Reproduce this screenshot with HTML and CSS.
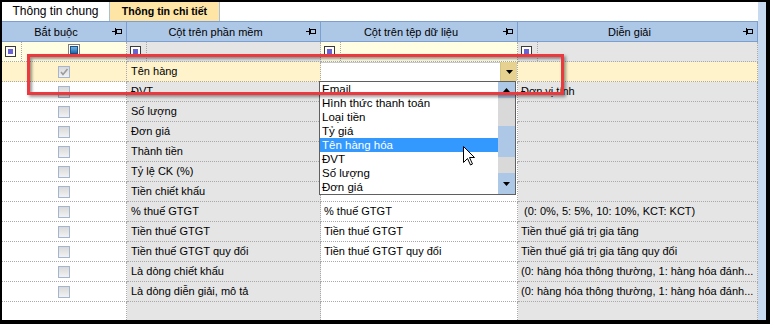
FILE: index.html
```html
<!DOCTYPE html>
<html>
<head>
<meta charset="UTF-8">
<link rel="stylesheet" href="styles.css">
</head>
<body>
<div class="window">
    <div class="main">
        <div class="tabs">
            <div class="tab tab-general">Thông tin chung</div>
            <div class="tab tab-detail">Thông tin chi tiết</div>
        </div>

        <div class="grid-row header">
            <div class="hcell"><span class="hlabel">Bắt buộc</span><svg class="pin" width="10" height="8" viewBox="0 0 10 8"><path d="M0 3.5H3.5M3.5 0V7" stroke="#000" fill="none"/><rect x="4.5" y="1.5" width="5" height="4" stroke="#000" fill="none"/></svg></div>
            <div class="hcell"><span class="hlabel">Cột trên phần mềm</span><svg class="pin" width="10" height="8" viewBox="0 0 10 8"><path d="M0 3.5H3.5M3.5 0V7" stroke="#000" fill="none"/><rect x="4.5" y="1.5" width="5" height="4" stroke="#000" fill="none"/></svg></div>
            <div class="hcell"><span class="hlabel">Cột trên tệp dữ liệu</span><svg class="pin" width="10" height="8" viewBox="0 0 10 8"><path d="M0 3.5H3.5M3.5 0V7" stroke="#000" fill="none"/><rect x="4.5" y="1.5" width="5" height="4" stroke="#000" fill="none"/></svg></div>
            <div class="hcell"><span class="hlabel">Diễn giải</span><svg class="pin" width="10" height="8" viewBox="0 0 10 8"><path d="M0 3.5H3.5M3.5 0V7" stroke="#000" fill="none"/><rect x="4.5" y="1.5" width="5" height="4" stroke="#000" fill="none"/></svg></div>
        </div>

        <!-- auto filter row -->
        <div class="grid-row filter">
            <div class="fcell cream"><span class="op-cell"><span class="op"><i></i></span></span><span class="fval"><span class="fcheck"><i></i></span></span></div>
            <div class="fcell gray"><span class="op-cell"><span class="op"><i></i></span></span><span class="fval"></span></div>
            <div class="fcell cream"><span class="op-cell"><span class="op"><i></i></span></span><span class="fval"></span></div>
            <div class="fcell gray"><span class="op-cell"><span class="op"><i></i></span></span><span class="fval"></span></div>
        </div>

        <div class="grid-row focused">
            <div class="cell c1"><span class="check"><svg width="10" height="10" viewBox="0 0 10 10"><path d="M2 5L4 7.5L8.5 2" stroke="#9c9c9c" stroke-width="1.6" fill="none"/></svg></span></div>
            <div class="cell c2">Tên hàng</div>
            <div class="cell c3 combo-cell"><span class="combo"></span><span class="combo-btn"><svg width="7" height="4" viewBox="0 0 7 4"><path d="M0 0H7L3.5 4Z" fill="#000"/></svg></span></div>
            <div class="cell c4"></div>
        </div>
        <div class="grid-row">
            <div class="cell c1"><span class="check"></span></div>
            <div class="cell c2">ĐVT</div>
            <div class="cell c3"></div>
            <div class="cell c4">Đơn vị tính</div>
        </div>
        <div class="grid-row">
            <div class="cell c1"><span class="check"></span></div>
            <div class="cell c2">Số lượng</div>
            <div class="cell c3"></div>
            <div class="cell c4"></div>
        </div>
        <div class="grid-row">
            <div class="cell c1"><span class="check"></span></div>
            <div class="cell c2">Đơn giá</div>
            <div class="cell c3"></div>
            <div class="cell c4"></div>
        </div>
        <div class="grid-row">
            <div class="cell c1"><span class="check"></span></div>
            <div class="cell c2">Thành tiền</div>
            <div class="cell c3"></div>
            <div class="cell c4"></div>
        </div>
        <div class="grid-row">
            <div class="cell c1"><span class="check"></span></div>
            <div class="cell c2">Tỷ lệ CK (%)</div>
            <div class="cell c3"></div>
            <div class="cell c4"></div>
        </div>
        <div class="grid-row">
            <div class="cell c1"><span class="check"></span></div>
            <div class="cell c2">Tiền chiết khấu</div>
            <div class="cell c3"></div>
            <div class="cell c4"></div>
        </div>
        <div class="grid-row">
            <div class="cell c1"><span class="check"></span></div>
            <div class="cell c2">% thuế GTGT</div>
            <div class="cell c3">% thuế GTGT</div>
            <div class="cell c4"> (0: 0%, 5: 5%, 10: 10%, KCT: KCT)</div>
        </div>
        <div class="grid-row">
            <div class="cell c1"><span class="check"></span></div>
            <div class="cell c2">Tiền thuế GTGT</div>
            <div class="cell c3">Tiền thuế GTGT</div>
            <div class="cell c4">Tiền thuế giá trị gia tăng</div>
        </div>
        <div class="grid-row">
            <div class="cell c1"><span class="check"></span></div>
            <div class="cell c2">Tiền thuế GTGT quy đổi</div>
            <div class="cell c3">Tiền thuế GTGT quy đổi</div>
            <div class="cell c4">Tiền thuế giá trị gia tăng quy đổi</div>
        </div>
        <div class="grid-row">
            <div class="cell c1"><span class="check"></span></div>
            <div class="cell c2">Là dòng chiết khấu</div>
            <div class="cell c3"></div>
            <div class="cell c4">(0: hàng hóa thông thường, 1: hàng hóa đánh...</div>
        </div>
        <div class="grid-row">
            <div class="cell c1"><span class="check"></span></div>
            <div class="cell c2">Là dòng diễn giải, mô tả</div>
            <div class="cell c3"></div>
            <div class="cell c4">(0: hàng hóa thông thường, 1: hàng hóa đánh...</div>
        </div>
        <div class="grid-row">
            <div class="cell c1"></div>
            <div class="cell c2"></div>
            <div class="cell c3"></div>
            <div class="cell c4"></div>
        </div>
    </div>
    <div class="side-strip"></div>

    <!-- open combo list -->
    <div class="dropdown">
        <div class="items">
            <div class="item">Email</div>
            <div class="item">Hình thức thanh toán</div>
            <div class="item">Loại tiền</div>
            <div class="item">Tỷ giá</div>
            <div class="item selected">Tên hàng hóa</div>
            <div class="item">ĐVT</div>
            <div class="item">Số lượng</div>
            <div class="item">Đơn giá</div>
        </div>
        <div class="vscroll">
            <div class="sb-btn sb-up"><svg width="7" height="4" viewBox="0 0 7 4"><path d="M0 4H7L3.5 0Z" fill="#000"/></svg></div>
            <div class="sb-track sb-top"></div>
            <div class="sb-thumb"></div>
            <div class="sb-track sb-bottom"></div>
            <div class="sb-btn sb-down"><svg width="7" height="4" viewBox="0 0 7 4"><path d="M0 0H7L3.5 4Z" fill="#000"/></svg></div>
        </div>
    </div>

    <div class="callout"></div>

    <svg class="cursor" width="13" height="20" viewBox="0 0 13 20"><path d="M0.5 0.5V16.5L4.5 12.5L7.5 19L9.5 18L6.5 11.5H11.5Z" fill="#fff" stroke="#000" stroke-linejoin="round"/></svg>
</div>
</body>
</html>
```

FILE: styles.css
```css
* {
    box-sizing: border-box;
}

body {
    margin: 0;
    background: #000;
    font-family: "Liberation Sans", Arial, sans-serif;
    font-size: 11px;
    color: #000;
}

.window {
    position: relative;
    width: 770px;
    height: 324px;
    padding: 2px 4px 4px 2px;
    display: flex;
    background: #000;
}

.main {
    width: 756px;
    height: 318px;
    background: #fff;
    overflow: hidden;
    display: flex;
    flex-direction: column;
}

.side-strip {
    width: 8px;
    background: #c8daf0;
}

/* tabs */
.tabs {
    display: flex;
    height: 19px;
    flex-shrink: 0;
    background: #fff;
}

.tab {
    display: flex;
    align-items: center;
    justify-content: center;
    border-right: 1px solid #a7bfdd;
    padding-bottom: 1px;
}

.tab-general {
    width: 108px;
    font-size: 12px;
}

.tab-detail {
    width: 110px;
    background: #fee5a6;
    font-weight: bold;
    font-size: 10.6px;
}

/* grid */
.grid-row {
    display: grid;
    grid-template-columns: 125px 194px 197px 240px;
    flex-shrink: 0;
}

.header {
    height: 21px;
    background: #adc7e7;
    border-top: 1px solid #7d9fcf;
    border-bottom: 1px solid #7d9fcf;
}

.hcell {
    display: flex;
    align-items: center;
    border-right: 1px solid #7d9fcf;
    font-size: 11px;
}

.hlabel {
    flex: 1;
    text-align: center;
    white-space: nowrap;
}

.pin {
    margin-right: 4px;
    margin-left: 2px;
}

.filter {
    height: 20px;
}

.fcell {
    display: flex;
    border-right: 1px dotted #a9a9a9;
    border-bottom: 1px dotted #a9a9a9;
}

.fcell.cream {
    background: #fffde2;
}

.fcell.gray {
    background: #e5e5e5;
}

.op-cell {
    width: 20px;
    display: flex;
    align-items: center;
    padding-left: 3px;
    border-right: 1px dotted #a9a9a9;
}

.op {
    width: 11px;
    height: 11px;
    border: 1px solid #3a3a3a;
    background: #fff;
    padding: 2px;
}

.op i {
    display: block;
    width: 5px;
    height: 5px;
    background: #6a64d2;
}

.fval {
    flex: 1;
    display: flex;
    align-items: center;
    justify-content: center;
}

.fcheck {
    width: 12px;
    height: 12px;
    border: 1px solid #7e7e7e;
    background: #fff;
    padding: 1px;
    margin-bottom: 3px;
}

.fcheck i {
    display: block;
    width: 8px;
    height: 8px;
    border: 1px solid #1f4f80;
    background: linear-gradient(#6fb3e6, #1f6aab);
}

.cell {
    height: 20px;
    line-height: 19px;
    padding-left: 3px;
    border-right: 1px dotted #a9a9a9;
    border-bottom: 1px dotted #a9a9a9;
    white-space: pre;
    overflow: hidden;
}

.c1 {
    display: flex;
    align-items: center;
    justify-content: center;
    padding-left: 0;
}

.c2 {
    background: #e5e5e5;
    padding-left: 4px;
}

.c4 {
    background: #e5e5e5;
}

.focused .c1,
.focused .c2,
.focused .c4 {
    background: #fff3cb;
}

.check {
    width: 12px;
    height: 12px;
    border: 1px solid #a5b5cd;
    background: linear-gradient(#d9d9d9, #f2f2f2);
    display: flex;
    align-items: center;
    justify-content: center;
}

.combo-cell {
    display: flex;
    padding-left: 0;
}

.combo {
    flex: 1;
    background: #fff;
    border-top: 1px solid #c9c9c9;
}

.combo-btn {
    width: 17px;
    display: flex;
    align-items: center;
    justify-content: center;
    background: #e6d190;
    border-left: 1px solid #d6c283;
}

/* dropdown list */
.dropdown {
    position: absolute;
    left: 319px;
    top: 81px;
    width: 197px;
    height: 114px;
    border: 1px solid #5f5f5f;
    background: #fff;
    display: flex;
}

.items {
    flex: 1;
}

.item {
    height: 14px;
    line-height: 14px;
    padding-left: 2px;
    font-size: 11.5px;
    white-space: nowrap;
}

.item.selected {
    background: #3399ff;
    color: #fff;
}

.vscroll {
    width: 17px;
    display: flex;
    flex-direction: column;
}

.sb-btn {
    display: flex;
    align-items: center;
    justify-content: center;
    background: #adc7e6;
}

.sb-up {
    height: 16px;
}

.sb-down {
    height: 21px;
}

.sb-track {
    background: #d9d9d9;
}

.sb-top {
    height: 28px;
}

.sb-thumb {
    height: 31px;
    background: #adc7e6;
}

.sb-bottom {
    height: 16px;
}

/* red annotation box */
.callout {
    position: absolute;
    left: 27px;
    top: 54px;
    width: 537px;
    height: 41px;
    border: 3px solid #ea3a40;
    box-shadow: 2px 2px 3px rgba(0, 0, 0, 0.4), inset 2px 2px 3px rgba(0, 0, 0, 0.4);
}

.cursor {
    position: absolute;
    left: 463px;
    top: 146px;
}
```
